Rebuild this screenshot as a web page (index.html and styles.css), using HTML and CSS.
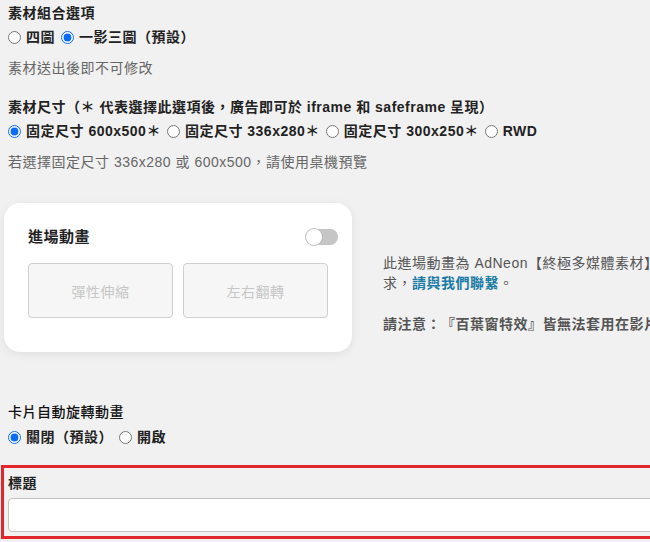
FILE: index.html
```html
<!DOCTYPE html>
<html lang="zh-Hant">
<head>
  <meta charset="UTF-8" />
  <title>素材設定</title>
  <link rel="stylesheet" href="styles.css">
</head>
<body>
  <div class="page">
    <div class="field first">
      <div class="label">素材組合選項</div>
      <div class="options">
        <label><input type="radio" name="combo" /> 四圖</label>
        <label><input type="radio" name="combo" checked /> 一影三圖（預設）</label>
      </div>
      <div class="hint">素材送出後即不可修改</div>
    </div>

    <div class="field">
      <div class="label">素材尺寸（＊ 代表選擇此選項後，廣告即可於 iframe 和 safeframe 呈現）</div>
      <div class="options">
        <label><input type="radio" name="size" checked /> 固定尺寸 600x500＊</label>
        <label><input type="radio" name="size" /> 固定尺寸 336x280＊</label>
        <label><input type="radio" name="size" /> 固定尺寸 300x250＊</label>
        <label><input type="radio" name="size" /> RWD</label>
      </div>
      <div class="hint">若選擇固定尺寸 336x280 或 600x500，請使用桌機預覽</div>
    </div>

    <div class="anim-row">
      <div class="card">
        <div class="card-head">
          <span class="card-title">進場動畫</span>
          <span class="toggle"><span class="knob"></span></span>
        </div>
        <div class="card-btns">
          <button class="anim-btn" disabled>彈性伸縮</button>
          <button class="anim-btn" disabled>左右翻轉</button>
        </div>
      </div>
      <div class="anim-note">
        <p>此進場動畫為 AdNeon【終極多媒體素材】專屬功能，如有需求，<a href="#">請與我們聯繫</a>。</p>
        <p class="warn">請注意：『百葉窗特效』皆無法套用在影片素材上</p>
      </div>
    </div>

    <div class="field rotate">
      <div class="label light">卡片自動旋轉動畫</div>
      <div class="options">
        <label><input type="radio" name="rotate" checked /> 關閉（預設）</label>
        <label><input type="radio" name="rotate" /> 開啟</label>
      </div>
    </div>

    <div class="title-box">
      <div class="label">標題</div>
      <input type="text" class="title-input" />
    </div>
  </div>
</body>
</html>
```

FILE: styles.css
```css
* { box-sizing: border-box; }
html, body { overflow: hidden; }
body { margin: 0; background: #f1f1f1; color: #222; font-family: "Liberation Sans", "Noto Sans CJK TC", sans-serif; font-size: 14px; line-height: 20px; letter-spacing: 0.5px; text-spacing-trim: space-all; }
.page { width: 1000px; padding-left: 8px; }

.field { margin-top: 19px; }
.field.first { margin-top: 3px; }
.label { font-weight: bold; }
.label.light { font-weight: 500; color: #111; }
.options { margin-top: 4px; display: flex; gap: 6px; font-weight: bold; }
.options label { display: flex; align-items: center; gap: 5px; }
.options input { margin: 0; width: 13px; height: 13px; accent-color: #0a6cf5; }
.hint { margin-top: 11px; color: #666; }

.anim-row { display: flex; align-items: flex-start; margin-top: 31px; margin-left: -4px; }
.card { width: 348px; height: 149px; background: #fff; border-radius: 16px; box-shadow: 0 2px 10px rgba(0,0,0,0.08); padding: 24px 14px 0 24px; }
.card-head { display: flex; align-items: center; justify-content: space-between; height: 20px; }
.card-title { font-weight: bold; font-size: 15px; }
.toggle { width: 32px; height: 16px; border-radius: 8px; background: #c6c6c6; position: relative; }
.knob { position: absolute; left: 0; top: 0; width: 16px; height: 16px; border-radius: 50%; background: #fff; box-shadow: 0 0 0 1px #bbb; }
.card-btns { display: flex; gap: 10px; margin-top: 16px; }
.anim-btn { width: 145px; height: 55px; background: #f6f6f6; border: 1px solid #cfcfcf; border-radius: 4px; color: #c6c6c6; font-family: inherit; font-size: 14px; letter-spacing: 0.5px; }

.anim-note { width: 420px; margin-left: 31px; padding-top: 50px; color: #555; }
.anim-note p { margin: 0; }
.anim-note a { color: #1a7ba6; text-decoration: none; font-weight: bold; }
.anim-note .warn { margin-top: 21px; font-weight: bold; }

.field.rotate { margin-top: 50px; }
.rotate .options { margin-top: 5px; }

.title-box { margin-top: 18px; margin-left: -7px; width: 1000px; border: 3px solid #e3262a; padding: 5px 4px 4px; }
.title-input { display: block; width: 100%; height: 34px; margin-top: 5px; border: 1px solid #c2c2c2; border-radius: 4px; background: #fff; }
```
